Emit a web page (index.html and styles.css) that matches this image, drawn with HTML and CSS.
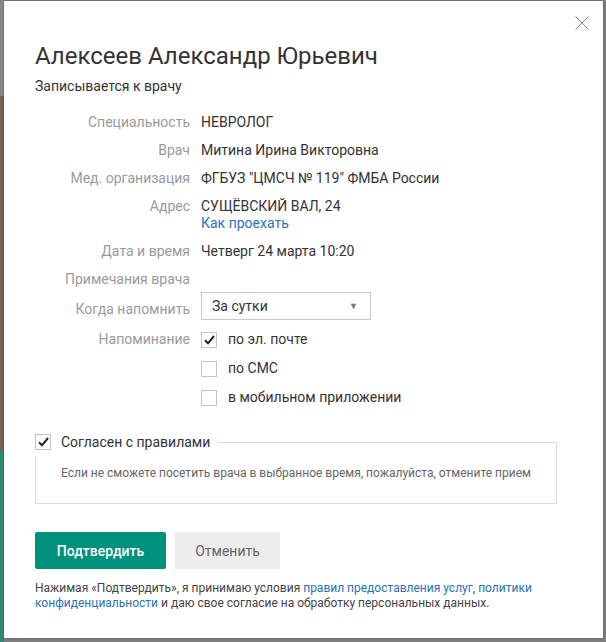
FILE: index.html
```html
<!DOCTYPE html>
<html lang="ru">
<head>
<meta charset="utf-8">
<title>Запись к врачу</title>
<link rel="stylesheet" href="styles.css">
</head>
<body>
<div class="backdrop">
  <div class="side">
    <div class="side-gray"></div>
    <div class="side-brown"></div>
    <div class="side-green"></div>
  </div>
  <div class="modal">
    <button class="close" aria-label="Закрыть">
      <svg width="14" height="14" viewBox="0 0 14 14"><path d="M0.5 0.5 L13.5 13.5 M13.5 0.5 L0.5 13.5" stroke="#8a8a8a" stroke-width="1" fill="none"/></svg>
    </button>
    <h1 class="title">Алексеев Александр Юрьевич</h1>
    <p class="subtitle">Записывается к врачу</p>

    <div class="details">
      <div class="label">Специальность</div>
      <div class="value">НЕВРОЛОГ</div>

      <div class="label">Врач</div>
      <div class="value">Митина Ирина Викторовна</div>

      <div class="label">Мед. организация</div>
      <div class="value">ФГБУЗ "ЦМСЧ № 119" ФМБА России</div>

      <div class="label">Адрес</div>
      <div class="value">СУЩЁВСКИЙ ВАЛ, 24<br><a class="link" href="#">Как проехать</a></div>

      <div class="label">Дата и время</div>
      <div class="value">Четверг 24 марта 10:20</div>

      <div class="label">Примечания врача</div>
      <div class="value"></div>

      <div class="label label-select">Когда напомнить</div>
      <div class="value">
        <div class="select"><span>За сутки</span><span class="arrow">&#9660;</span></div>
      </div>

      <div class="label">Напоминание</div>
      <div class="value checks">
        <label class="check"><span class="box checked"><svg width="11" height="10" viewBox="0 0 11 10"><path d="M1 5.2 L4 8.3 L10 1" stroke="#222" stroke-width="2" fill="none"/></svg></span>по эл. почте</label>
        <label class="check"><span class="box"></span>по СМС</label>
        <label class="check"><span class="box"></span>в мобильном приложении</label>
      </div>
    </div>

    <div class="rules">
      <div class="rules-legend">
        <span class="box checked"><svg width="11" height="10" viewBox="0 0 11 10"><path d="M1 5.2 L4 8.3 L10 1" stroke="#222" stroke-width="2" fill="none"/></svg></span>
        <span class="rules-title">Согласен с правилами</span>
      </div>
      <p class="rules-text">Если не сможете посетить врача в выбранное время, пожалуйста, отмените прием</p>
    </div>

    <div class="actions">
      <button class="btn btn-primary">Подтвердить</button>
      <button class="btn btn-secondary">Отменить</button>
    </div>

    <p class="terms">Нажимая «Подтвердить», я принимаю условия <a class="link" href="#">правил предоставления услуг</a>, <a class="link" href="#">политики конфиденциальности</a> и даю свое согласие на обработку персональных данных.</p>
  </div>
</div>
</body>
</html>
```

FILE: styles.css
```css
html, body {
  margin: 0;
  padding: 0;
  height: 100%;
}
body {
  background: #7d7d7d;
  font-family: Roboto, "Liberation Sans", Arial, sans-serif;
  color: #333;
  overflow: hidden;
}
.backdrop {
  position: relative;
  display: flex;
  padding: 1px 3px 4px 4px;
  height: 100%;
  box-sizing: border-box;
}
.side {
  position: absolute;
  left: 0;
  top: 0;
  bottom: 0;
  width: 4px;
  display: flex;
  flex-direction: column;
}
.side-gray { height: 96px; background: #858585; }
.side-brown { height: 354px; background: #7a625c; }
.side-green { flex: 1; background: #2f8a72; }
.modal {
  position: relative;
  flex: 1;
  background: #fff;
  padding: 42px 46px 0 31px;
  box-shadow: 0 0 2px rgba(0,0,0,0.35);
}
.close {
  position: absolute;
  right: 13px;
  top: 14px;
  width: 16px;
  height: 16px;
  padding: 1px;
  border: 0;
  background: none;
  cursor: pointer;
}
.title {
  margin: 0;
  font-size: 24px;
  font-weight: 400;
  line-height: 27px;
  color: #333;
}
.subtitle {
  margin: 8px 0 0;
  font-size: 14px;
  line-height: 17px;
  color: #333;
}
.details {
  display: grid;
  grid-template-columns: 155px 1fr;
  column-gap: 11px;
  row-gap: 11px;
  margin-top: 19px;
  font-size: 14px;
  line-height: 17px;
}
.label {
  text-align: right;
  color: #9a9a9a;
}
.label-select {
  align-self: center;
}
.value {
  color: #333;
}
.link {
  color: #2a72b5;
  text-decoration: none;
}
.select {
  box-sizing: border-box;
  width: 170px;
  height: 28px;
  margin-top: -7px;
  border: 1px solid #c8c8c8;
  display: flex;
  align-items: center;
  justify-content: space-between;
  padding: 0 12px 0 10px;
  font-size: 14px;
  color: #333;
}
.arrow {
  font-size: 9px;
  color: #777;
}
.checks {
  display: flex;
  flex-direction: column;
  gap: 12px;
}
.check {
  display: flex;
  align-items: center;
  height: 17px;
}
.box {
  box-sizing: border-box;
  width: 16px;
  height: 16px;
  border: 1px solid #c4c4c4;
  background: #fff;
  display: inline-flex;
  align-items: center;
  justify-content: center;
  margin-right: 11px;
  flex: none;
}
.rules {
  position: relative;
  margin-top: 36px;
  border: 1px solid #dcdcdc;
  padding: 23px 24px 22px 25px;
}
.rules-legend {
  position: absolute;
  left: -1px;
  top: -9px;
  height: 22px;
  display: flex;
  align-items: flex-start;
  background: #fff;
  padding-right: 8px;
  font-size: 14px;
  line-height: 17px;
}
.rules-legend .box {
  margin-right: 10px;
}
.rules-title {
  color: #333;
}
.rules-text {
  margin: 0;
  font-size: 12px;
  line-height: 15px;
  color: #666;
}
.actions {
  display: flex;
  gap: 9px;
  margin-top: 28px;
}
.btn {
  height: 37px;
  border: 0;
  border-radius: 2px;
  font-family: inherit;
  font-size: 14px;
  cursor: pointer;
}
.btn-primary {
  width: 131px;
  background: #00917d;
  color: #fff;
  font-weight: 500;
}
.btn-secondary {
  width: 105px;
  background: #ededed;
  color: #666;
}
.terms {
  margin: 12px 0 0;
  font-size: 12px;
  line-height: 15px;
  color: #444;
}
```
